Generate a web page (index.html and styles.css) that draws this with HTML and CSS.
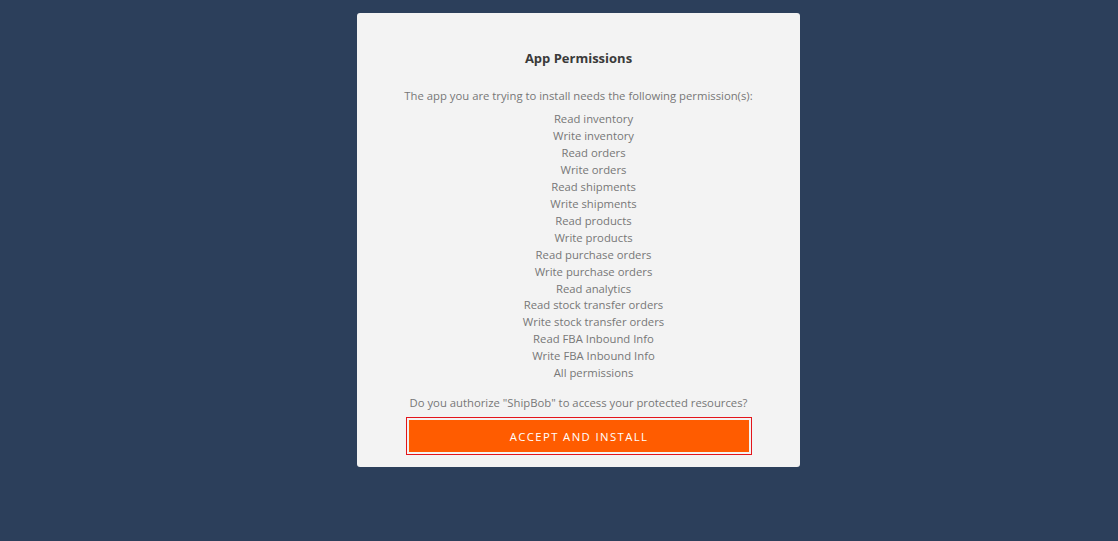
FILE: index.html
```html
<!DOCTYPE html>
<html lang="en">
<head>
<meta charset="utf-8">
<title>App Permissions</title>
<link rel="stylesheet" href="styles.css">
</head>
<body>
<div class="page">
  <div class="card">
    <h1 class="title">App Permissions</h1>
    <p class="intro">The app you are trying to install needs the following permission(s):</p>
    <ul class="perms">
      <li>Read inventory</li>
      <li>Write inventory</li>
      <li>Read orders</li>
      <li>Write orders</li>
      <li>Read shipments</li>
      <li>Write shipments</li>
      <li>Read products</li>
      <li>Write products</li>
      <li>Read purchase orders</li>
      <li>Write purchase orders</li>
      <li>Read analytics</li>
      <li>Read stock transfer orders</li>
      <li>Write stock transfer orders</li>
      <li>Read FBA Inbound Info</li>
      <li>Write FBA Inbound Info</li>
      <li>All permissions</li>
    </ul>
    <p class="question">Do you authorize "ShipBob" to access your protected resources?</p>
    <button class="accept" type="button">ACCEPT AND INSTALL</button>
  </div>
</div>
</body>
</html>
```

FILE: styles.css
```css
html, body {
  margin: 0;
  padding: 0;
  background: #2c3f5b;
  height: 100%;
}
body {
  font-family: "Open Sans", "Liberation Sans", sans-serif;
  overflow: hidden;
}
.page {
  padding: 13px 0 0 357px;
}
.card {
  width: 443px;
  box-sizing: border-box;
  background: #f3f3f3;
  border-radius: 3px;
  padding: 36px 0 15px;
  display: flex;
  flex-direction: column;
  align-items: center;
  text-align: center;
}
.title {
  margin: 0;
  font-size: 13px;
  line-height: 18px;
  font-weight: 700;
  color: #3a3a3a;
}
.intro, .question {
  margin: 20px 0 0;
  font-size: 11.3px;
  line-height: 17px;
  color: #777;
}
.question {
  margin-top: 12px;
}
.perms {
  list-style: none;
  margin: 7px 0 0;
  padding: 0 0 0 30px;
  font-size: 11.3px;
  line-height: 16.95px;
  color: #777;
}
.accept {
  margin-top: 9px;
  width: 340px;
  height: 32px;
  border: none;
  border-radius: 0;
  background: #ff5c00;
  color: #fff;
  font-family: "Open Sans", "Liberation Sans", sans-serif;
  font-size: 11.3px;
  letter-spacing: 1.4px;
  outline: 1px solid #e3151b;
  outline-offset: 2px;
  padding: 0 0 0 1px;
  cursor: pointer;
}
```
